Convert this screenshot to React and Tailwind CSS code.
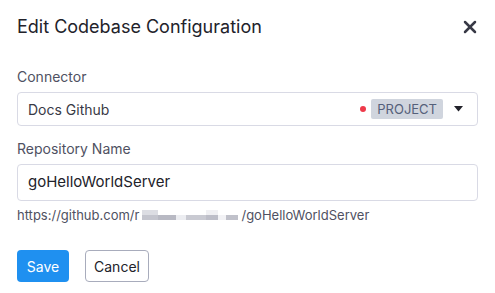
import { X } from "lucide-react";

const font = { fontFamily: "Inter, 'Noto Sans', sans-serif" };

function Blurred() {
  return (
    <span className="mx-[3px] inline-flex h-[10px] items-end">
      <span className="flex h-full w-[16px] flex-col">
        <span className="h-1/2 bg-[#dcdde3]" />
        <span className="h-1/2 bg-[#c4c5ce]" />
      </span>
      <span className="h-[5px] w-[18px] bg-[#b8b9c3]" />
      <span className="h-[5px] w-[10px] bg-[#ecedf1]" />
      <span className="h-[5px] w-[20px] bg-[#c9cad2]" />
      <span className="flex h-full w-[12px] flex-col">
        <span className="h-1/2 bg-[#f0f0f3]" />
        <span className="h-1/2 bg-[#bdbec8]" />
      </span>
      <span className="h-[5px] w-[8px] bg-[#f2f2f5]" />
      <span className="h-[5px] w-[12px] bg-[#c0c1ca]" />
    </span>
  );
}

export default function App() {
  return (
    <main
      className="h-[293px] w-[495px] bg-white px-[17px] pt-[15px] text-[#22222a]"
      style={font}
    >
      <header className="flex h-[24px] items-center justify-between">
        <h1 className="text-[18px] font-normal leading-[24px]">
          Edit Codebase Configuration
        </h1>
        <button type="button" className="mr-[-2px] text-[#383946]">
          <X size={20} strokeWidth={3} />
        </button>
      </header>

      <label className="mt-[28px] block text-[14px] leading-[20px] text-[#4f5162]">
        Connector
      </label>
      <div className="mt-[5px] flex h-[34px] items-center rounded-[4px] border border-[#d9dae5] pl-[10px] pr-[14px]">
        <span className="flex-1 text-[14px] text-[#383946]">Docs Github</span>
        <span className="mr-[5px] h-[6px] w-[6px] rounded-full bg-[#ee3a4a]" />
        <span className="rounded-[2px] bg-[#d0d5de] px-[6px] text-[13px] leading-[20px] text-[#55607a]">
          PROJECT
        </span>
        <svg className="ml-[11px]" width="9" height="6" viewBox="0 0 9 6">
          <path d="M0 0h9L4.5 5.5z" fill="#22222a" />
        </svg>
      </div>

      <label className="mt-[13px] block text-[14px] leading-[20px] text-[#4f5162]">
        Repository Name
      </label>
      <div className="mt-[5px] flex h-[37px] items-center rounded-[4px] border border-[#d9dae5] pl-[10px]">
        <span className="text-[15px] text-[#22222a]">goHelloWorldServer</span>
      </div>
      <p className="mt-[6px] flex items-center text-[13px] leading-[16px] text-[#4f5162]">
        https://github.com/r
        <Blurred />
        /goHelloWorldServer
      </p>

      <div className="mt-[27px] flex gap-[16px]">
        <button
          type="button"
          className="h-[32px] w-[52px] rounded-[4px] bg-[#1f90f0] text-[14px] text-white"
        >
          Save
        </button>
        <button
          type="button"
          className="h-[32px] w-[64px] rounded-[4px] border border-[#a8acbc] bg-white text-[14px] text-[#22222a]"
        >
          Cancel
        </button>
      </div>
    </main>
  );
}
